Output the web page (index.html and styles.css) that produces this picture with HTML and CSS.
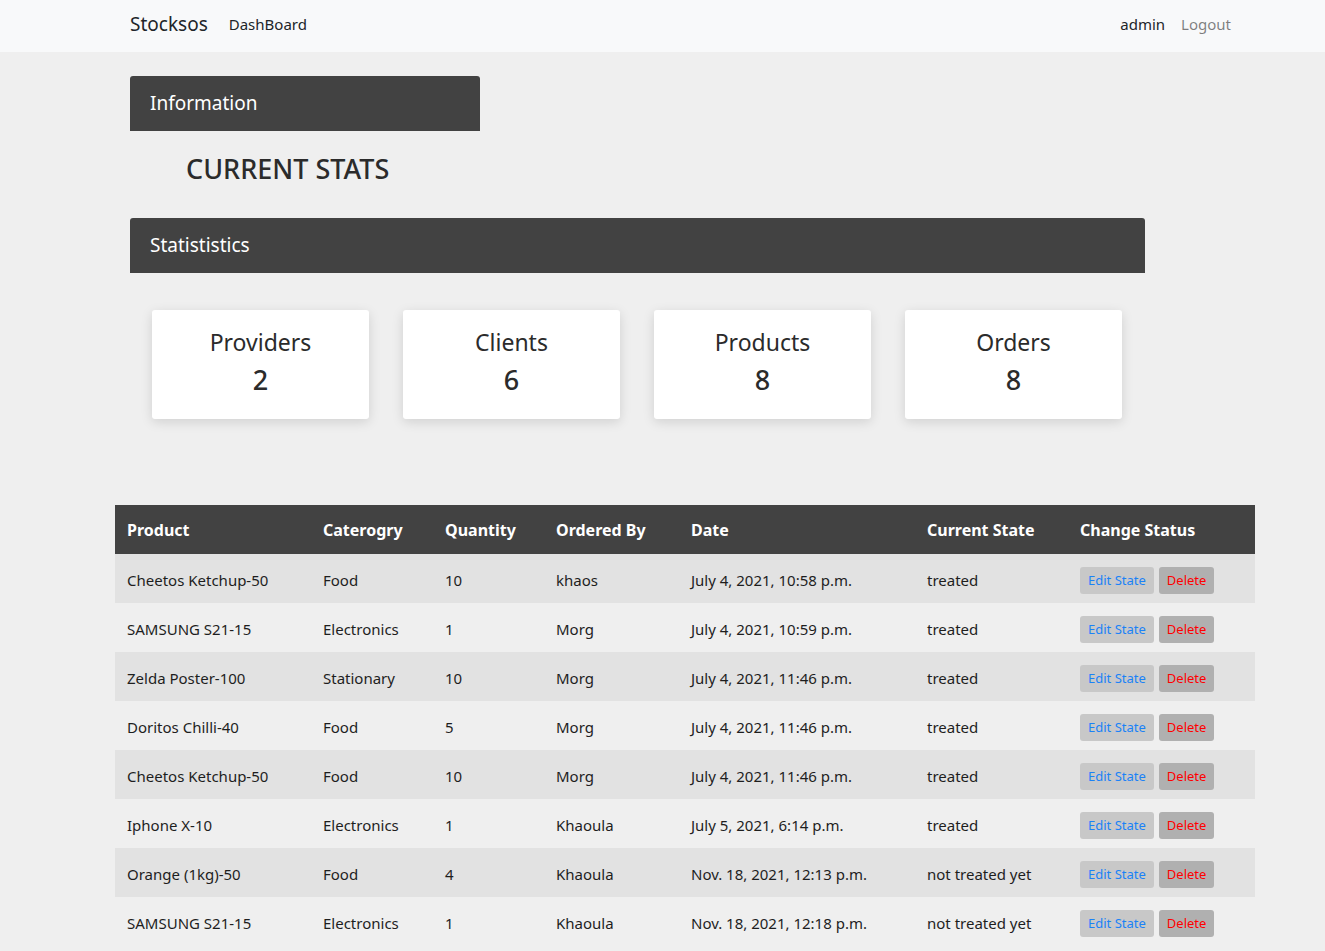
FILE: index.html
```html
<!DOCTYPE html>
<html>
<head>
<meta charset="utf-8">
<title>Stocksos</title>
<link rel="stylesheet" href="styles.css">
</head>
<body>
<nav class="navbar">
  <div class="nav-left">
    <span class="brand">Stocksos</span>
    <span class="nav-link dark">DashBoard</span>
  </div>
  <div class="nav-right">
    <span class="nav-link dark">admin</span>
    <span class="nav-link muted">Logout</span>
  </div>
</nav>
<main class="main">
  <div class="panel-head small">Information</div>
  <h2 class="stats-title">CURRENT STATS</h2>
  <div class="panel-head wide">Statististics</div>
  <div class="cards">
    <div class="card"><div class="card-label">Providers</div><div class="card-num">2</div></div>
    <div class="card"><div class="card-label">Clients</div><div class="card-num">6</div></div>
    <div class="card"><div class="card-label">Products</div><div class="card-num">8</div></div>
    <div class="card"><div class="card-label">Orders</div><div class="card-num">8</div></div>
  </div>
</main>
<table class="orders">
  <colgroup>
    <col class="c1"><col class="c2"><col class="c3"><col class="c4"><col class="c5"><col class="c6"><col class="c7">
  </colgroup>
  <thead>
    <tr><th>Product</th><th>Caterogry</th><th>Quantity</th><th>Ordered By</th><th>Date</th><th>Current State</th><th>Change Status</th></tr>
  </thead>
  <tbody>
    <tr><td>Cheetos Ketchup-50</td><td>Food</td><td>10</td><td>khaos</td><td>July 4, 2021, 10:58 p.m.</td><td>treated</td><td><span class="btn edit">Edit State</span><span class="btn del">Delete</span></td></tr>
    <tr><td>SAMSUNG S21-15</td><td>Electronics</td><td>1</td><td>Morg</td><td>July 4, 2021, 10:59 p.m.</td><td>treated</td><td><span class="btn edit">Edit State</span><span class="btn del">Delete</span></td></tr>
    <tr><td>Zelda Poster-100</td><td>Stationary</td><td>10</td><td>Morg</td><td>July 4, 2021, 11:46 p.m.</td><td>treated</td><td><span class="btn edit">Edit State</span><span class="btn del">Delete</span></td></tr>
    <tr><td>Doritos Chilli-40</td><td>Food</td><td>5</td><td>Morg</td><td>July 4, 2021, 11:46 p.m.</td><td>treated</td><td><span class="btn edit">Edit State</span><span class="btn del">Delete</span></td></tr>
    <tr><td>Cheetos Ketchup-50</td><td>Food</td><td>10</td><td>Morg</td><td>July 4, 2021, 11:46 p.m.</td><td>treated</td><td><span class="btn edit">Edit State</span><span class="btn del">Delete</span></td></tr>
    <tr><td>Iphone X-10</td><td>Electronics</td><td>1</td><td>Khaoula</td><td>July 5, 2021, 6:14 p.m.</td><td>treated</td><td><span class="btn edit">Edit State</span><span class="btn del">Delete</span></td></tr>
    <tr><td>Orange (1kg)-50</td><td>Food</td><td>4</td><td>Khaoula</td><td>Nov. 18, 2021, 12:13 p.m.</td><td>not treated yet</td><td><span class="btn edit">Edit State</span><span class="btn del">Delete</span></td></tr>
    <tr><td>SAMSUNG S21-15</td><td>Electronics</td><td>1</td><td>Khaoula</td><td>Nov. 18, 2021, 12:18 p.m.</td><td>not treated yet</td><td><span class="btn edit">Edit State</span><span class="btn del">Delete</span></td></tr>
  </tbody>
</table>
</body>
</html>
```
FILE: styles.css
```css
* { box-sizing: border-box; }
html, body { margin: 0; padding: 0; }
body {
  background: #efefef;
  font-family: "Noto Sans", "Open Sans", sans-serif;
  color: #212529;
  font-size: 16px;
  line-height: 1.5;
}
.navbar {
  height: 52px;
  background: #f8f9fa;
  display: flex;
  align-items: center;
  justify-content: space-between;
  padding: 0 94px 4px 130px;
}
.nav-left, .nav-right { display: flex; align-items: center; }
.brand { font-size: 19px; margin-right: 21px; color: #212529; }
.nav-link { font-size: 15px; }
.nav-link.dark { color: #212529; }
.nav-right .nav-link { margin-left: 16px; }
.nav-link.muted { color: rgba(0,0,0,.5); }
.main { padding: 24px 0 0 130px; }
.panel-head {
  background: #424242;
  color: #fff;
  height: 55px;
  display: flex;
  align-items: center;
  padding-left: 20px;
  font-size: 19px;
  border-radius: 3px 3px 0 0;
}
.panel-head.small { width: 350px; }
.panel-head.wide { width: 1015px; }
.stats-title {
  margin: 0;
  padding: 15px 0 27px 56px;
  font-size: 27px;
  font-weight: 500;
  line-height: 45px;
  color: #2b2b2b;
}
.cards {
  display: flex;
  gap: 34px;
  padding: 37px 0 0 22px;
}
.card {
  width: 217px;
  height: 109px;
  background: #fff;
  border-radius: 3px;
  box-shadow: 0 3px 12px rgba(0,0,0,.13);
  text-align: center;
  padding-top: 14px;
  color: #2b2b2b;
}
.card-label { font-size: 23px; line-height: 36px; }
.card-num { font-size: 27px; line-height: 40px; font-weight: 500; }
.orders {
  margin: 86px 0 0 115px;
  width: 1140px;
  border-collapse: collapse;
  table-layout: fixed;
}
.c1 { width: 196px; } .c2 { width: 122px; } .c3 { width: 111px; } .c4 { width: 135px; }
.c5 { width: 236px; } .c6 { width: 153px; } .c7 { width: 187px; }
.orders th {
  background: #424242;
  color: #fff;
  text-align: left;
  font-weight: 700;
  font-size: 16px;
  height: 49px;
  padding: 0 12px;
}
.orders td {
  height: 49px;
  padding: 4px 12px 0;
  font-size: 15px;
  color: #1e1e1e;
  white-space: nowrap;
}
.orders tbody tr:nth-child(odd) { background: #e2e2e2; }
.orders tbody tr:nth-child(even) { background: #efefef; }
.btn {
  display: inline-block;
  font-size: 13px;
  line-height: 17px;
  padding: 5px 8px;
  border-radius: 3px;
}
.btn.edit { background: #c8c8c8; color: #1a82f7; margin-right: 5px; }
.btn.del { background: #b0b0b0; color: #ff0000; }
```
